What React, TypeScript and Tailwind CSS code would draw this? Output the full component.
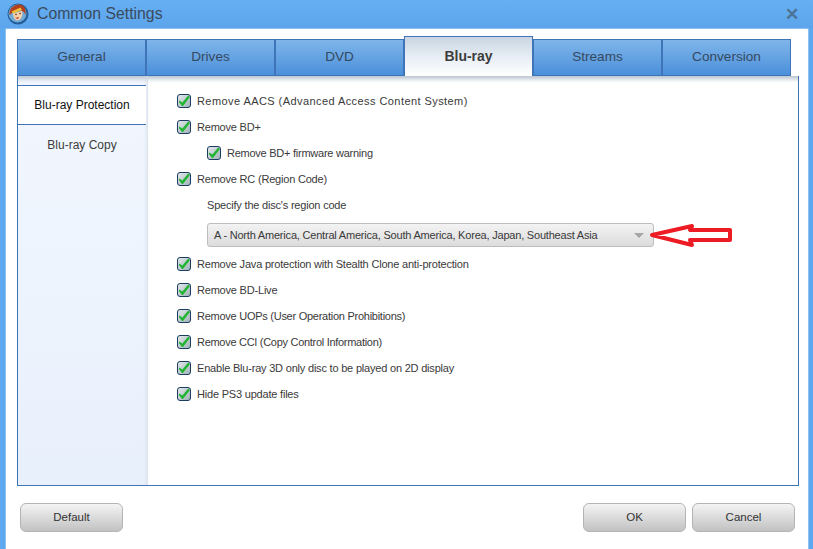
const tabs = ['General', 'Drives', 'DVD', 'Blu-ray', 'Streams', 'Conversion'];

function Check({ label, className = '' }: { label: string; className?: string }) {
  return (
    <div className="flex items-center h-[14px] gap-[6px]">
      <svg width="14" height="14" viewBox="0 0 14 14" className="shrink-0">
        <defs>
          <linearGradient id="box" x1="0" y1="0" x2="1" y2="1">
            <stop offset="0" stopColor="#e6eaec" />
            <stop offset="1" stopColor="#9fb0b6" />
          </linearGradient>
        </defs>
        <rect x="0.5" y="0.5" width="13" height="13" rx="2.5" fill="url(#box)" stroke="#1c3d63" />
        <path d="M2.2 6.4 L5.4 8.6 L11.2 1.6 L13 3 L6 12 L5 12 L1.8 8 Z" fill="#22b534" />
      </svg>
      <span className={`whitespace-nowrap ${className}`}>{label}</span>
    </div>
  );
}

function Btn({ label }: { label: string }) {
  return (
    <button className="w-[103px] h-[29px] rounded-[6px] border border-[#b4b4b4] bg-gradient-to-b from-[#f4f4f4] to-[#c2c2c2] text-[11.5px] text-[#333]">
      {label}
    </button>
  );
}

function Logo() {
  return (
    <svg width="22" height="22" viewBox="0 0 22 22">
      <circle cx="11" cy="11" r="10.5" fill="#235f96" />
      <circle cx="10.5" cy="10.5" r="9" fill="#6fa9d8" />
      <path d="M2.5 12 C2 5 7 1.5 12 1.5 C17 1.5 19.5 6 18.5 12 C17.5 9.5 16 8 14 7.5 L5 10 Z" fill="#b33f1d" />
      <path d="M4.5 8.5 L13.5 4.5 L15 7 L6 10.5 Z" fill="#efbf3a" />
      <path d="M6 10.5 L15 8 C16 11 15 15.5 12 17 C9 18.5 6 15.5 6 10.5 Z" fill="#f6cfa8" />
      <path d="M8 15 L12 14 L11 16 Z" fill="#b8342a" />
      <circle cx="9" cy="11.5" r="0.8" fill="#5a2a18" />
      <circle cx="13" cy="10.5" r="0.8" fill="#5a2a18" />
    </svg>
  );
}

export default function App() {
  return (
    <div className="relative w-[813px] h-[549px] overflow-hidden flex flex-col bg-[#5ea8ef] font-['Liberation_Sans',sans-serif]">
      <div className="h-[28px] shrink-0 flex items-center pl-[7px] pr-[14px] bg-gradient-to-b from-[#66aff3] to-[#5ca5ec]">
        <Logo />
        <span className="ml-[8px] text-[15.8px] text-[#3b4a5c]">Common Settings</span>
        <span className="ml-auto text-[17px] leading-none font-bold text-[#4d7396]">✕</span>
      </div>

      <div className="flex-1 ml-[5px] mr-[4px] bg-white border-t border-l border-r border-[#8fc1f0] rounded-t-[2px] pl-[11px] pr-[10px] pt-[7px] flex flex-col">
        <div className="h-[40px] shrink-0 flex items-end">
          {tabs.map((t) =>
            t === 'Blu-ray' ? (
              <div
                key={t}
                className="w-[129px] h-[40px] flex items-center justify-center border border-b-0 border-[#3f75b8] bg-gradient-to-b from-[#c9d5e2] via-[#e6edf4] to-white text-[14px] font-bold text-[#3c3c3c]"
              >
                {t}
              </div>
            ) : (
              <div
                key={t}
                className="w-[129px] h-[37px] flex items-center justify-center border border-[#3f75b8] bg-gradient-to-b from-[#7fb5ea] to-[#4a90da] text-[13.6px] text-[#35495f]"
              >
                {t}
              </div>
            ),
          )}
        </div>

        <div className="h-[410px] w-[782px] shrink-0 flex border border-t-0 border-[#3f75b8]">
          <div className="w-[130px] shrink-0 bg-gradient-to-b from-[#f2f7fe] to-[#e8f0fc] flex flex-col pt-[9px] text-[12px] shadow-[inset_-4px_0_4px_-3px_#d4dce8,inset_0_6px_4px_-3px_#b9c4cf]">
            <div className="h-[40px] mr-[2px] flex items-center justify-center bg-white border-y border-[#3f75b8] text-[#111]">
              Blu-ray Protection
            </div>
            <div className="h-[40px] mr-[2px] flex items-center justify-center text-[#3c3c3c]">Blu-ray Copy</div>
          </div>

          <div className="flex-1 pl-[29px] pt-[18px] text-[11px] tracking-[-0.2px] text-[#3a3a3a] flex flex-col gap-[12px] shadow-[inset_0_6px_4px_-3px_#b9c4cf]">
            <Check label="Remove AACS (Advanced Access Content System)" className="tracking-[0.43px]" />
            <Check label="Remove BD+" />
            <div className="pl-[30px]">
              <Check label="Remove BD+ firmware warning" className="tracking-[-0.25px]" />
            </div>
            <Check label="Remove RC (Region Code)" />
            <div className="pl-[30px] h-[14px] leading-[14px]">Specify the disc's region code</div>
            <div className="ml-[30px] -mt-[1px] -mb-[2px] w-[447px] h-[24px] shrink-0 flex items-center justify-between pl-[6px] pr-[9px] rounded-[3px] border border-[#bdbdbd] bg-gradient-to-b from-[#f3f3f3] to-[#dcdcdc]">
              <span className="whitespace-nowrap">A - North America, Central America, South America, Korea, Japan, Southeast Asia</span>
              <span className="w-0 h-0 border-x-[5px] border-x-transparent border-t-[5px] border-t-[#a5a5a5]" />
            </div>
            <Check label="Remove Java protection with Stealth Clone anti-protection" />
            <Check label="Remove BD-Live" />
            <Check label="Remove UOPs (User Operation Prohibitions)" className="tracking-[-0.26px]" />
            <Check label="Remove CCI (Copy Control Information)" className="tracking-[-0.29px]" />
            <Check label="Enable Blu-ray 3D only disc to be played on 2D display" />
            <Check label="Hide PS3 update files" />
          </div>
        </div>

        <div className="flex-1 flex items-start pt-[17px] pl-[3px] gap-[6px]">
          <Btn label="Default" />
          <div className="ml-auto flex gap-[6px] mr-[3px]">
            <Btn label="OK" />
            <Btn label="Cancel" />
          </div>
        </div>
      </div>

      <svg className="absolute left-[648px] top-[222px]" width="88" height="26" viewBox="0 0 88 26">
        <path
          d="M4 13 L44 4 L42 8 L82 8 L82 18 L42 18 L44 23 Z"
          fill="white"
          stroke="#ed1c24"
          strokeWidth="4"
          strokeLinejoin="round"
        />
      </svg>
    </div>
  );
}
